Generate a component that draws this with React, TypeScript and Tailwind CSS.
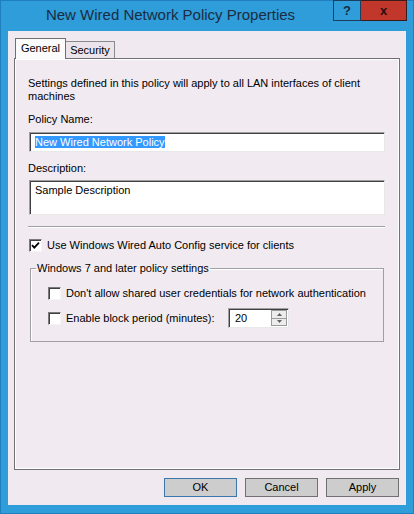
import React from 'react';

const font = { fontFamily: '"Liberation Sans", Arial, sans-serif' };

const Check = ({ checked = false }: { checked?: boolean }) => (
  <span className="relative flex h-[13px] w-[13px] shrink-0 items-center justify-center border border-t-[#7a7a7a] border-l-[#7a7a7a] border-b-[#f4f4f4] border-r-[#f4f4f4] bg-white shadow-[inset_1px_1px_0_#404040]">
    {checked && (
      <svg width="9" height="9" viewBox="0 0 9 9">
        <path d="M1 4.2 L3.3 6.6 L8 1.6" fill="none" stroke="#000" strokeWidth="1.8" />
      </svg>
    )}
  </span>
);

const Btn = ({ label, primary = false }: { label: string; primary?: boolean }) => (
  <button
    className={
      'h-[19px] w-[73px] border bg-[#cdcdcd] text-[11px] leading-[13px] text-black ' +
      (primary ? 'border-[#3a77ad]' : 'border-[#707070]')
    }
  >
    {label}
  </button>
);

export default function App() {
  return (
    <div
      className="flex h-[514px] w-[414px] flex-col bg-[#2e9dd9] px-[8px] pb-[9px] shadow-[inset_0_0_0_1px_#1f7fbf]"
      style={font}
    >
      {/* title bar */}
      <div className="-mx-[8px] flex h-[31px] shrink-0">
        <div className="flex-1 pl-[8px] pt-[6px] text-center text-[15px] leading-[18px] text-[#1b2c42]">
          New Wired Network Policy Properties
        </div>
        <div className="mr-[7px] flex items-start">
          <div className="flex h-[21px] w-[28px] items-center justify-center border border-[#1d3f5e] text-[13px] font-bold text-[#1b2c42]">
            ?
          </div>
          <div className="flex h-[21px] w-[46px] items-center justify-center border border-l-0 border-[#3b1a1a] bg-[#c1372c] text-[13px] font-bold text-[#2a0f0f]">
            x
          </div>
        </div>
      </div>

      {/* client area */}
      <div className="flex flex-1 flex-col bg-[#f0e9f0] px-[6px] pt-[7px] text-[11px] leading-[13px] text-black">
        {/* tabs */}
        <div className="flex h-[20px] items-end">
          <div className="relative z-10 -mb-px ml-[1px] flex h-[21px] w-[51px] justify-center border border-b-0 border-[#707070] bg-[#fbfbfb] pt-[3px]">
            General
          </div>
          <div className="flex h-[17px] w-[49px] justify-center border border-b-0 border-l-0 border-[#8a8a8a] bg-[#ebe4eb] pt-[2px]">
            Security
          </div>
        </div>

        {/* tab panel */}
        <div className="h-[412px] border border-[#707070] bg-[#f1eaf1] pl-[13px] pt-[18px] shadow-[inset_0_0_0_1px_#fff]">
          <p className="w-[340px]">
            Settings defined in this policy will apply to all LAN interfaces of client machines
          </p>

          <div className="mt-[10px]">Policy Name:</div>
          <div className="ml-[1px] mt-[6px] h-[20px] w-[356px] border border-t-[#a0a0a0] border-l-[#a0a0a0] border-b-[#e8e8e8] border-r-[#e8e8e8] bg-white pl-[5px] pt-[3px] shadow-[inset_1px_1px_0_#404040]">
            <span className="bg-[#3399ff] text-white">New Wired Network Policy</span>
          </div>

          <div className="mt-[10px]">Description:</div>
          <div className="ml-[1px] mt-[5px] h-[35px] w-[356px] border border-t-[#a0a0a0] border-l-[#a0a0a0] border-b-[#e8e8e8] border-r-[#e8e8e8] bg-white pl-[5px] pt-[3px] shadow-[inset_1px_1px_0_#404040]">
            Sample Description
          </div>

          <div className="mt-[11px] h-[2px] w-[357px] border-t border-t-[#a0a0a0] border-b border-b-white" />

          <label className="ml-[1px] mt-[11px] flex items-center gap-[5px]">
            <Check checked />
            <span>Use Windows Wired Auto Config service for clients</span>
          </label>

          <fieldset className="ml-[2px] mt-[10px] h-[80px] w-[354px] border border-[#a0a0a0] shadow-[inset_1px_1px_0_#fff]">
            <legend className="ml-[5px] px-[1px]">Windows 7 and later policy settings</legend>
            <div className="pl-[17px]">
              <label className="mt-[12px] flex items-center gap-[5px]">
                <Check />
                <span>Don&apos;t allow shared user credentials for network authentication</span>
              </label>
              <div className="mt-[8px] flex items-center gap-[5px]">
                <Check />
                <span className="w-[157px]">Enable block period (minutes):</span>
                <div className="flex h-[20px] w-[61px] border border-t-[#a0a0a0] border-l-[#a0a0a0] border-b-[#e8e8e8] border-r-[#e8e8e8] bg-white shadow-[inset_1px_1px_0_#404040]">
                  <span className="flex-1 pl-[6px] pt-[3px]">20</span>
                  <div className="my-[1px] mr-[1px] flex w-[16px] flex-col">
                    <div className="flex flex-1 items-center justify-center border border-[#9a9a9a] bg-[#ececec]">
                      <svg width="5" height="3" viewBox="0 0 5 3">
                        <path d="M0 3 L2.5 0 L5 3 Z" fill="#606060" />
                      </svg>
                    </div>
                    <div className="flex flex-1 items-center justify-center border border-t-0 border-[#9a9a9a] bg-[#ececec]">
                      <svg width="5" height="3" viewBox="0 0 5 3">
                        <path d="M0 0 L2.5 3 L5 0 Z" fill="#606060" />
                      </svg>
                    </div>
                  </div>
                </div>
              </div>
            </div>
          </fieldset>
        </div>

        {/* buttons */}
        <div className="mr-[1px] mt-[8px] flex justify-end gap-[8px]">
          <Btn label="OK" primary />
          <Btn label="Cancel" />
          <Btn label="Apply" />
        </div>
      </div>
    </div>
  );
}
